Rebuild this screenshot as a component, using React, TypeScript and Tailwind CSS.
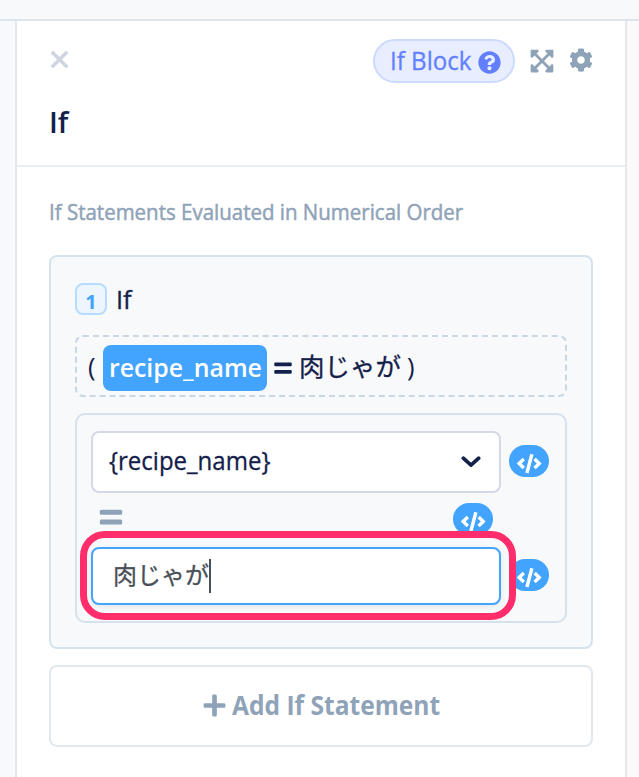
import React from "react";
import { FaCog, FaEquals, FaPlus, FaQuestionCircle, FaExpandArrowsAlt } from "react-icons/fa";

function CodeButton({ className = "" }: { className?: string }) {
  return (
    <button
      type="button"
      aria-label="Insert variable"
      className={`block h-8 w-10 shrink-0 rounded-2xl bg-[#42a4ff] ${className}`}
    >
      <svg viewBox="0 0 40 32" className="h-8 w-10" fill="none" stroke="#fff" strokeWidth="3.4">
        <path d="M14.8 14.1 L10.2 18.5 L14.8 22.9" />
        <path d="M25.6 14.1 L30.2 18.5 L25.6 22.9" />
        <path d="M22.9 9.2 L17.9 28" />
      </svg>
    </button>
  );
}

function Header() {
  return (
    <header className="h-[146px] border-b-2 border-[#e8eef3] px-8 pt-[18px]">
      <div className="flex h-11 items-center">
        <svg viewBox="0 0 20 20" className="mb-1 h-5 w-5" fill="none" stroke="#cfd6e2" strokeWidth="3.6" strokeLinecap="square">
          <path d="M4 4 L17 17 M17 4 L4 17" />
        </svg>
        <div className="ml-auto flex h-11 w-[142px] items-center rounded-full border-2 border-[#ccdafd] bg-[#e8edff] pl-[15px] text-[25px] leading-none text-[#617fff]">
          <span className="-mt-0.5 w-[88px] origin-left scale-x-[.965] whitespace-nowrap [-webkit-text-stroke:0.3px]">If Block</span>
          <FaQuestionCircle className="mt-0.5 h-[23px] w-[23px]" />
        </div>
        <FaExpandArrowsAlt className="ml-[14px] h-[26px] w-[26px] text-[#8fa3b8]" />
        <FaCog className="mb-0.5 ml-[14px] h-6 w-6 text-[#8fa3b8]" />
      </div>
      <h1 className="mt-[21px] text-[29px] leading-9 font-semibold text-[#13204a]">If</h1>
    </header>
  );
}

function Condition() {
  return (
    <div className="mt-4 h-[210px] rounded-[10px] border-2 border-[#d5e1ec] pt-4 pl-3.5">
      <div className="flex items-center gap-2">
        <div className="flex h-[62px] w-[410px] items-center rounded-lg border-2 border-[#d3d9e6] bg-white pr-[18px] pl-4">
          <span className="mb-1 origin-left scale-x-[.942] text-[25.5px] leading-8 text-[#13204a] [-webkit-text-stroke:0.3px]">{"{recipe_name}"}</span>
          <svg viewBox="0 0 20 12" className="ml-auto h-3 w-5" fill="none" stroke="#13204a" strokeWidth="3.6" strokeLinecap="round" strokeLinejoin="round">
            <path d="M2.3 2.2 L10 9.2 L17.7 2.2" />
          </svg>
        </div>
        <CodeButton className="-mt-0.5" />
      </div>
      <div className="flex h-[54px] w-[402px] items-start justify-between pt-2.5 pl-2">
        <svg viewBox="0 0 24 16" className="mt-[6px] h-4 w-6" fill="#8fa3b8">
          <rect x="0.8" y="0.8" width="22.4" height="5" rx="1.5" />
          <rect x="0.8" y="10.5" width="22.4" height="5" rx="1.5" />
        </svg>
        <CodeButton />
      </div>
      <div className="flex items-center gap-2">
        <div className="relative flex h-[58px] w-[410px] items-center rounded-lg border-2 border-[#42a4ff] bg-white pl-5 shadow-[0_2px_6px_rgba(0,0,0,0.08)]">
          <span className="mb-0.5 text-[24px] leading-8 whitespace-nowrap text-[#495057] [-webkit-text-stroke:0.3px]">肉じゃが</span>
          <span className="h-[34px] w-0.5 bg-[#495057]" />
          <div className="absolute -top-[18px] -left-[13px] z-10 h-[89px] w-[436px] rounded-[25px] border-[7px] border-[#ff2d6c]" />
        </div>
        <CodeButton className="-mt-0.5" />
      </div>
    </div>
  );
}

export default function App() {
  return (
    <div
      className="h-[777px] w-[639px] overflow-hidden bg-[#f8f9fb]"
      style={{ fontFamily: '"Open Sans", "Noto Sans CJK JP", sans-serif' }}
    >
      <div className="h-[21px] border-b-2 border-[#dce4ec]" />
      <div className="flex h-[756px]">
        <div className="w-[15px]" />
        <main className="w-[612px] border-x-2 border-l-[#e1e8ef] border-r-[#e6e8ea] bg-white">
          <Header />
          <section className="px-8 pt-[28px]">
            <p className="h-[60px] origin-left scale-x-[.931] text-[22px] leading-8 whitespace-nowrap text-[#8fa3b8] [-webkit-text-stroke:0.5px]">
              If Statements Evaluated in Numerical Order
            </p>
            <div className="h-[394px] rounded-lg border-2 border-[#d5e3ee] bg-[#f8f9fb] px-6 pt-[26px]">
              <div className="flex h-8 items-center">
                <span className="flex h-8 w-8 items-center justify-center rounded-lg border-2 border-[#b8dcff] bg-[#edf5ff] pt-[5px] text-[20px] leading-none font-bold text-[#42a4ff]">
                  1
                </span>
                <span className="ml-[9px] text-[25.5px] leading-8 text-[#13204a] [-webkit-text-stroke:0.3px]">If</span>
              </div>
              <div className="mt-5 flex h-[62px] items-center rounded-lg border-2 border-dashed border-[#c9d6e3] pl-[11px] text-[25.5px] leading-8 whitespace-nowrap text-[#13204a]">
                <span className="w-[15px]">(</span>
                <span className="mt-[3px] flex h-[46px] w-[164px] justify-center rounded-lg bg-[#42a4ff] leading-[44px] font-semibold text-white">
                  <span className="scale-x-[.975]">recipe_name</span>
                </span>
                <FaEquals className="mt-1 mr-1.5 ml-1.5 h-5 w-5" />
                <span className="[-webkit-text-stroke:0.3px]">肉じゃが</span>
                <span className="ml-1.5">)</span>
              </div>
              <Condition />
            </div>
            <button
              type="button"
              className="mt-4 flex h-[82px] w-full items-center justify-center gap-[5px] rounded-lg border-2 border-[#e1e8ee] pb-0.5 text-[26px] font-bold whitespace-nowrap text-[#8fa3b8]"
            >
              <FaPlus className="h-[25px] w-[25px] shrink-0" />
              <span className="w-[208px] origin-left text-left">
                <span className="inline-block origin-left scale-x-[.945]">Add If Statement</span>
              </span>
            </button>
          </section>
        </main>
        <div className="flex-1 bg-[#fafafa]" />
      </div>
    </div>
  );
}
